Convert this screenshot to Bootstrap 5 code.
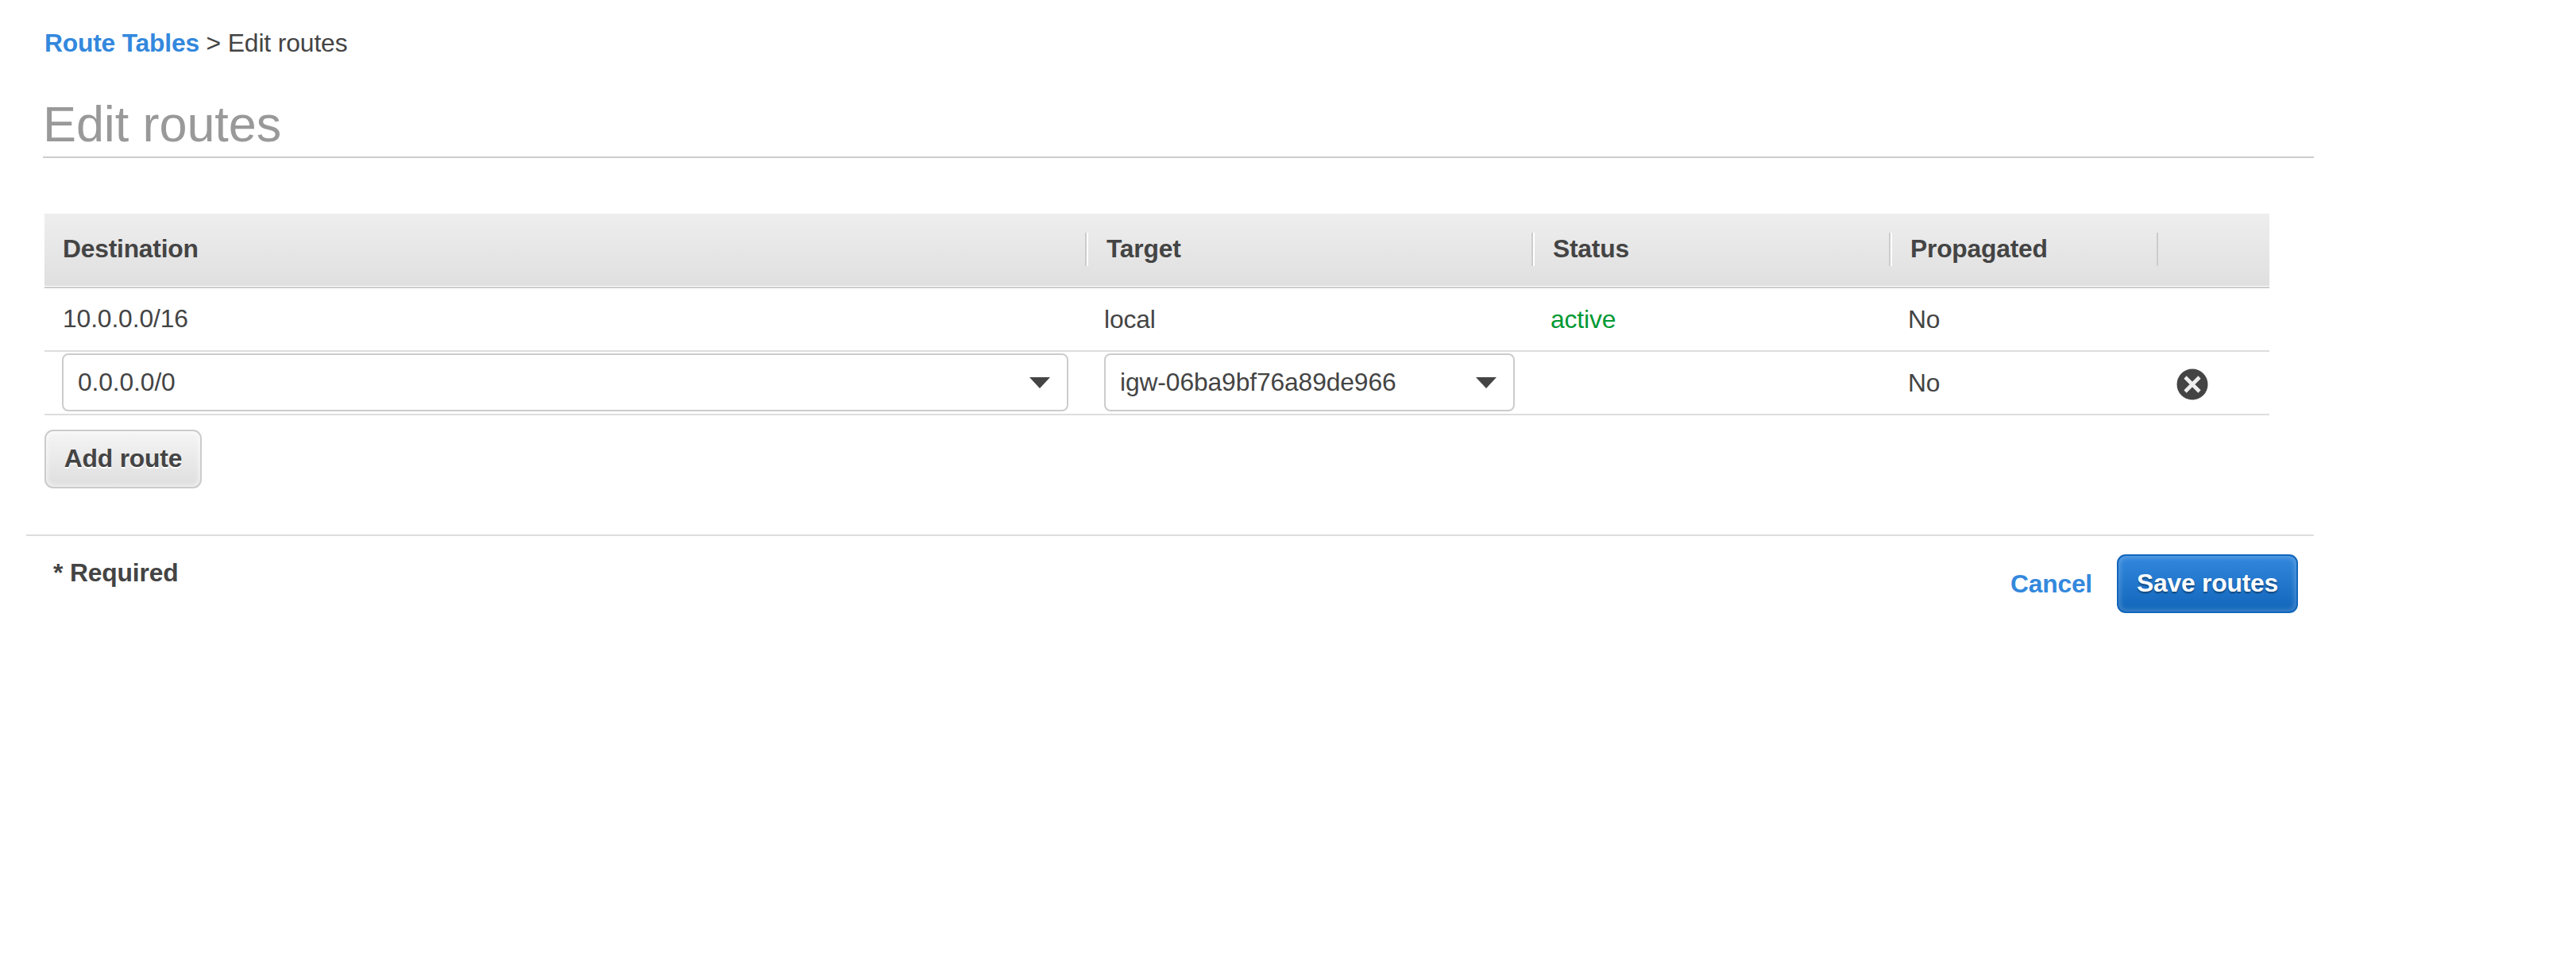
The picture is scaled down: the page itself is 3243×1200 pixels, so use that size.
<!DOCTYPE html>
<html lang="en">
<head>
<meta charset="utf-8">
<title>Edit routes</title>
<link href="https://cdn.jsdelivr.net/npm/bootstrap@5.3.0/dist/css/bootstrap.min.css" rel="stylesheet">
<style>
body{font-family:"Liberation Sans",Arial,sans-serif;font-size:31.8px;letter-spacing:-.12px;line-height:40px;color:#444;background:#fff}
a{color:#3388dd}
.page-body{width:2913px;padding:34px 0 0 33px}
.crumbs{padding-left:23px;height:40px}
.crumbs a{letter-spacing:-.2px}
.page-title{font-size:63px;letter-spacing:-.1px;line-height:70px;color:#999;font-weight:400;margin:47px 0 70px 21px;padding-bottom:6px;border-bottom:2px solid #ccc}
.routes{width:2801px;margin:0 0 18px 23px;table-layout:fixed;border-collapse:separate;border-spacing:0;color:#444}
.routes>thead{background:linear-gradient(#eee,#dfdfdf)}
.routes>thead>tr>th{height:94px;padding:24px 0 25px;border-bottom:2px solid #ccc;box-shadow:inset 0 -1px #fff;vertical-align:top}
.head-cell{height:42px;padding:0 0 0 23px;border-right:2px solid #ccc;border-left:2px solid #fff;line-height:40px;letter-spacing:-.22px}
th:first-child .head-cell{border-left:0}
th:last-child .head-cell{border:0}
th:nth-child(4) .head-cell{margin-right:-1px}
.routes>tbody>tr>td{padding:0 22px;height:80px;border-bottom:2px solid #ddd;vertical-align:middle}
.routes>tbody>tr>td:has(.picker){padding:2px 23px 3px 22px;vertical-align:top}
.picker{height:73px;border:2px solid #ccc;border-radius:8px;padding:0 21px 1px 18px;background:#fff}
.picker svg{margin-top:2px}
.cidr{display:block;margin-top:-2px;padding-left:1px}
.status-on{color:#009933}
.remove-icon{margin:4px 0 0 2px}
.add-btn,.save-btn{font-size:31.8px;letter-spacing:-.2px;line-height:40px;font-weight:700;height:74px;border-width:2px;border-radius:11px;padding:0 0 2px}
.add-btn{width:198px;margin-left:23px;color:#444;border-color:#ccc;background:linear-gradient(#f5f5f5,#dedede);box-shadow:inset 0 0 6px 1px rgba(255,255,255,.75);text-shadow:0 2px #fff}
.save-btn{width:228px;color:#fff;border-color:#1166bb;background:linear-gradient(#3388dd,#1166bb);box-shadow:inset 0 0 6px 2px rgba(255,255,255,.22);text-shadow:0 2px 2px rgba(0,0,0,.4)}
.foot{margin-top:58px;border-top:2px solid #ddd;padding:23px 20px 0 34px}
.required-note{padding-top:3px;letter-spacing:-.15px}
.cancel-link{margin-right:31px;letter-spacing:-.2px}
</style>
<script src="https://cdn.jsdelivr.net/npm/bootstrap@5.3.0/dist/js/bootstrap.bundle.min.js"></script>
</head>
<body>
<main class="page-body">
  <nav class="crumbs"><a href="#" class="fw-bold text-decoration-none">Route Tables</a> &gt; Edit routes</nav>
  <h1 class="page-title">Edit routes</h1>
  <table class="routes">
    <colgroup><col style="width:1312px"><col style="width:562px"><col style="width:450px"><col style="width:336px"><col style="width:141px"></colgroup>
    <thead>
      <tr>
        <th><div class="head-cell">Destination</div></th>
        <th><div class="head-cell">Target</div></th>
        <th><div class="head-cell">Status</div></th>
        <th><div class="head-cell">Propagated</div></th>
        <th><div class="head-cell"></div></th>
      </tr>
    </thead>
    <tbody>
      <tr>
        <td><span class="cidr">10.0.0.0/16</span></td><td>local</td><td><span class="status-on">active</span></td><td>No</td><td></td>
      </tr>
      <tr>
        <td><div class="picker d-flex align-items-center justify-content-between"><span>0.0.0.0/0</span><svg width="26" height="14" viewBox="0 0 26 14"><path d="M0 0H26L13 14Z" fill="#444"/></svg></div></td>
        <td><div class="picker d-flex align-items-center justify-content-between"><span>igw-06ba9bf76a89de966</span><svg width="26" height="14" viewBox="0 0 26 14"><path d="M0 0H26L13 14Z" fill="#444"/></svg></div></td>
        <td></td><td>No</td>
        <td><svg class="remove-icon d-block" width="40" height="40" viewBox="0 0 40 40"><circle cx="20" cy="20" r="19.5" fill="#444"/><path d="M11 11L29 29M29 11L11 29" stroke="#eee" stroke-width="4.6"/></svg></td>
      </tr>
    </tbody>
  </table>
  <button type="button" class="btn add-btn d-block">Add route</button>
  <footer class="foot d-flex justify-content-between align-items-start">
    <div class="fw-bold required-note">* Required</div>
    <div class="d-flex align-items-center"><a href="#" class="cancel-link fw-bold text-decoration-none">Cancel</a><button type="button" class="btn save-btn">Save routes</button></div>
  </footer>
</main>
</body>
</html>
